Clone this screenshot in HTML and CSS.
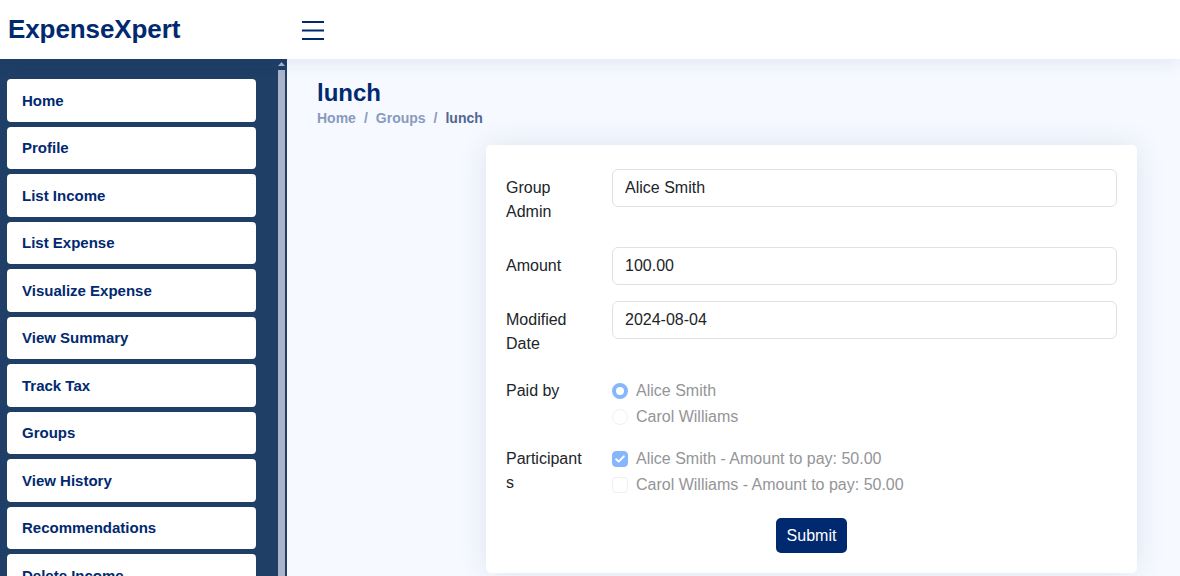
FILE: index.html
```html
<!DOCTYPE html>
<html lang="en">
<head>
<meta charset="utf-8">
<title>ExpenseXpert - lunch</title>
<link rel="stylesheet" href="styles.css">
</head>
<body>
<header class="header">
  <div class="logo">ExpenseXpert</div>
  <button class="toggle" aria-label="Toggle sidebar">
    <svg width="22" height="20" viewBox="0 0 22 20"><path d="M0 2h22M0 10.5h22M0 19h22" stroke="#012970" stroke-width="2" fill="none"/></svg>
  </button>
</header>
<div class="layout">
  <aside class="sidebar">
    <nav class="nav">
      <a class="nav-link" href="#">Home</a>
      <a class="nav-link" href="#">Profile</a>
      <a class="nav-link" href="#">List Income</a>
      <a class="nav-link" href="#">List Expense</a>
      <a class="nav-link" href="#">Visualize Expense</a>
      <a class="nav-link" href="#">View Summary</a>
      <a class="nav-link" href="#">Track Tax</a>
      <a class="nav-link" href="#">Groups</a>
      <a class="nav-link" href="#">View History</a>
      <a class="nav-link" href="#">Recommendations</a>
      <a class="nav-link" href="#">Delete Income</a>
    </nav>
    <div class="scrollbar">
      <svg class="arrow" width="7" height="4" viewBox="0 0 7 4"><path d="M0 4L3.5 0L7 4z" fill="#a9b4cb"/></svg>
      <div class="thumb"></div>
    </div>
  </aside>
  <main class="main">
    <div class="pagetitle">
      <h1>lunch</h1>
      <ol class="breadcrumb">
        <li><a href="#">Home</a></li>
        <li class="sep">/</li>
        <li><a href="#">Groups</a></li>
        <li class="sep">/</li>
        <li class="active">lunch</li>
      </ol>
    </div>
    <section class="card">
      <form class="form">
        <div class="row">
          <label class="col-label">Group Admin</label>
          <div class="col-field"><input class="input" type="text" value="Alice Smith"></div>
        </div>
        <div class="row">
          <label class="col-label">Amount</label>
          <div class="col-field"><input class="input" type="text" value="100.00"></div>
        </div>
        <div class="row">
          <label class="col-label">Modified Date</label>
          <div class="col-field"><input class="input" type="text" value="2024-08-04"></div>
        </div>
        <div class="row">
          <div class="col-label plain">Paid by</div>
          <div class="col-field">
            <div class="check"><span class="radio checked"></span><span class="check-label">Alice Smith</span></div>
            <div class="check"><span class="radio"></span><span class="check-label">Carol Williams</span></div>
          </div>
        </div>
        <div class="row">
          <div class="col-label plain">Participants</div>
          <div class="col-field">
            <div class="check"><span class="box checked"><svg width="10" height="8" viewBox="0 0 10 8"><path d="M1.2 4.2l2.5 2.4L8.8 1.4" stroke="#fff" stroke-width="2" fill="none" stroke-linecap="round" stroke-linejoin="round"/></svg></span><span class="check-label">Alice Smith - Amount to pay: 50.00</span></div>
            <div class="check"><span class="box"></span><span class="check-label">Carol Williams - Amount to pay: 50.00</span></div>
          </div>
        </div>
        <div class="actions">
          <button class="btn" type="button">Submit</button>
        </div>
      </form>
    </section>
  </main>
</div>
</body>
</html>
```
FILE: styles.css
```css
* { box-sizing: border-box; }
html, body { margin: 0; height: 100%; overflow: hidden; }
body {
  font-family: "Liberation Sans", Arial, sans-serif;
  background: #f6f9ff;
  color: #212529;
}
.header {
  height: 59px;
  background: #fff;
  display: flex;
  align-items: center;
  box-shadow: 0 2px 20px rgba(1, 41, 112, 0.1);
  position: relative;
  z-index: 2;
}
.logo {
  width: 302px;
  padding-left: 8px;
  font-size: 26px;
  font-weight: 700;
  color: #012970;
  letter-spacing: -0.1px;
}
.toggle {
  background: none;
  border: 0;
  padding: 0;
  display: flex;
  margin-top: 1px;
}
.layout {
  display: flex;
  height: calc(100% - 59px);
}
.sidebar {
  width: 287px;
  flex: none;
  background: #1f3f66;
  overflow: hidden;
  display: flex;
  justify-content: space-between;
  padding-left: 7px;
}
.nav {
  width: 249px;
  padding: 20px 0;
  display: flex;
  flex-direction: column;
  gap: 5px;
}
.nav-link {
  height: 42.5px;
  flex: none;
  display: flex;
  align-items: center;
  padding-left: 15px;
  background: #fff;
  border-radius: 4px;
  color: #012970;
  font-size: 15px;
  font-weight: 700;
  text-decoration: none;
}
.scrollbar {
  width: 9px;
  flex: none;
  display: flex;
  flex-direction: column;
  align-items: flex-start;
  padding: 3px 2px 0 0;
}
.arrow { display: block; }
.thumb {
  margin-top: 4px;
  width: 7px;
  flex: 1;
  background: #a9b4cb;
}
.main {
  flex: 1;
  padding: 20px 30px 0 30px;
  overflow: hidden;
}
.pagetitle h1 {
  margin: 0;
  font-size: 24px;
  line-height: 28px;
  font-weight: 700;
  color: #012970;
}
.breadcrumb {
  list-style: none;
  margin: 1px 0 0;
  padding: 0;
  display: flex;
  gap: 8px;
  font-size: 14px;
  line-height: 20px;
  font-weight: 700;
  color: #899bbd;
}
.breadcrumb a { color: #899bbd; text-decoration: none; }
.breadcrumb .active { color: #51678f; }
.card {
  margin: 17px 0 0 169px;
  width: 651px;
  background: #fff;
  border-radius: 5px;
  box-shadow: 0 0 30px rgba(1, 41, 112, 0.1);
  padding: 24px 20px 20px 20px;
}
.row {
  display: flex;
  margin-bottom: 16px;
}
.col-label {
  width: 106px;
  flex: none;
  padding: 7px 24px 7px 0;
  font-size: 16px;
  line-height: 24px;
  color: #212529;
  overflow-wrap: anywhere;
}
.col-label.plain { padding-top: 0; padding-bottom: 0; }
.col-field { flex: 1; }
.input {
  width: 100%;
  height: 38px;
  font: 16px/24px "Liberation Sans", Arial, sans-serif;
  color: #212529;
  padding: 6px 12px;
  border: 1px solid #dee2e6;
  border-radius: 6px;
  background: #fff;
}
.check {
  display: flex;
  align-items: center;
  height: 24px;
  margin-bottom: 2px;
  font-size: 16px;
}
.radio, .box {
  width: 16px;
  height: 16px;
  flex: none;
  margin-right: 8px;
  border: 1px solid #eef0f3;
  background: #fff;
}
.radio { border-radius: 50%; }
.radio.checked { border: 4px solid #86b7fe; }
.box { border-radius: 4px; display: flex; align-items: center; justify-content: center; }
.box.checked { background: #86b7fe; border-color: #86b7fe; }
.check-label { color: #939598; }
.actions {
  display: flex;
  justify-content: center;
  padding-top: 3px;
}
.btn {
  background: #012970;
  color: #fff;
  border: 0;
  border-radius: 5px;
  font: 16px/24px "Liberation Sans", Arial, sans-serif;
  padding: 6px 11px 5px;
}
```
